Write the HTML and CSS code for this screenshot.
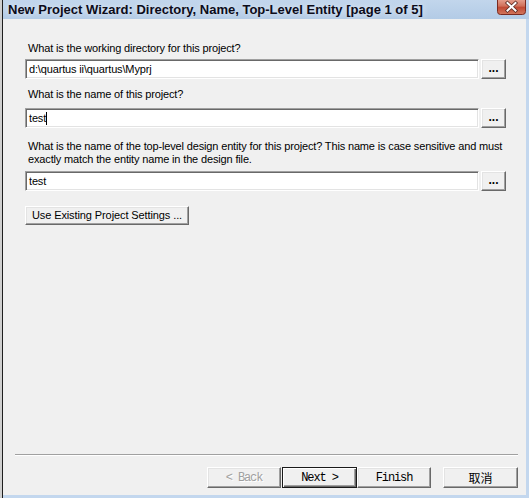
FILE: index.html
```html
<!DOCTYPE html>
<html>
<head>
<meta charset="utf-8">
<link rel="stylesheet" href="styles.css">
</head>
<body>
<div class="screen">
  <div class="backdrop"></div>
  <div class="window">
    <div class="titlebar">
      <span class="title">New Project Wizard: Directory, Name, Top-Level Entity [page 1 of 5]</span>
      <span class="close">
        <svg width="29" height="16" viewBox="0 0 29 16">
          <defs>
            <linearGradient id="cg" x1="0" y1="0" x2="0" y2="1">
              <stop offset="0" stop-color="#e8a493"/>
              <stop offset="0.45" stop-color="#d0705a"/>
              <stop offset="0.55" stop-color="#c14a34"/>
              <stop offset="1" stop-color="#d2785e"/>
            </linearGradient>
          </defs>
          <path d="M0.5 0 V12.5 Q0.5 15.5 3.5 15.5 H25.5 Q28.5 15.5 28.5 12.5 V0" fill="url(#cg)" stroke="#7a2a20"/>
          <path d="M10.5 4 L18.5 11.5 M18.5 4 L10.5 11.5" stroke="#5a2a22" stroke-width="3.6" stroke-linecap="square"/>
          <path d="M10.5 4 L18.5 11.5 M18.5 4 L10.5 11.5" stroke="#ffffff" stroke-width="2" stroke-linecap="square"/>
        </svg>
      </span>
    </div>
    <div class="body">
      <div class="content">
        <div class="label l1">What is the working directory for this project?</div>
        <div class="row">
          <div class="input">d:\quartus ii\quartus\Myprj</div>
          <div class="btn browse">...</div>
        </div>
        <div class="label l2">What is the name of this project?</div>
        <div class="row">
          <div class="input">test<span class="caret"></span></div>
          <div class="btn browse">...</div>
        </div>
        <div class="label l3">What is the name of the top-level design entity for this project? This name is case sensitive and must<br>exactly match the entity name in the design file.</div>
        <div class="row">
          <div class="input">test</div>
          <div class="btn browse">...</div>
        </div>
        <div class="btn existing">Use Existing Project Settings ...</div>
      </div>
      <div class="footer">
        <div class="separator"></div>
        <div class="buttons">
          <div class="btn nav disabled">&lt; Back</div>
          <div class="btn nav default"><span>Next &gt;</span></div>
          <div class="btn nav">Finish</div>
          <div class="btn nav cancel">取消</div>
        </div>
      </div>
    </div>
  </div>
</div>
</body>
</html>
```
FILE: styles.css
```css
* { box-sizing: border-box; }
html, body { margin: 0; padding: 0; }
body {
  width: 529px;
  height: 498px;
  overflow: hidden;
  background: #f0f0f0;
  font-family: "Liberation Sans", Arial, sans-serif;
  font-size: 11px;
  color: #000;
}
.screen {
  display: flex;
  width: 529px;
  height: 498px;
}
.backdrop {
  width: 3px;
  flex: none;
  background: #cfcfcf;
  border-right: 1px solid #1e1e1e;
}
.window {
  flex: 1;
  display: flex;
  flex-direction: column;
  min-width: 0;
}
.titlebar {
  height: 19px;
  flex: none;
  display: flex;
  align-items: flex-start;
  justify-content: space-between;
  background: linear-gradient(#c2d6ec, #b3cbe6);
  padding-left: 5px;
  padding-right: 3px;
}
.title {
  font-family: "Liberation Sans", Arial, sans-serif;
  font-weight: bold;
  font-size: 13px;
  line-height: 19px;
  color: #0c0c1a;
  text-shadow: 0 0 6px rgba(255,255,255,0.8);
  white-space: nowrap;
}
.close {
  display: block;
  height: 16px;
  margin-top: -1px;
}
.close svg { display: block; }
.body {
  flex: 1;
  display: flex;
  flex-direction: column;
  justify-content: space-between;
  border-right: 3px solid #c3d7ee;
  border-bottom: 3px solid #c3d7ee;
  background: #f0f0f0;
}
.content {
  padding-left: 22px;
  padding-right: 20px;
  display: flex;
  flex-direction: column;
  align-items: flex-start;
}
.label {
  line-height: 13px;
  padding-left: 3px;
  width: 100%;
  letter-spacing: -0.15px;
  white-space: nowrap;
}
.l1 { margin-top: 23px; margin-bottom: 4px; }
.l2 { margin-top: 9px; margin-bottom: 7px; }
.l3 { margin-top: 12px; margin-bottom: 5px; }
.row {
  display: flex;
  width: 100%;
  gap: 2px;
}
.input {
  flex: 1;
  height: 20px;
  background: #fff;
  border-top: 1px solid #a0a0a0;
  border-left: 1px solid #a0a0a0;
  border-right: 1px solid #fff;
  border-bottom: 1px solid #fff;
  box-shadow: inset 1px 1px 0 #696969, inset -1px -1px 0 #e3e3e3;
  padding-left: 3px;
  line-height: 18px;
  letter-spacing: -0.15px;
  white-space: nowrap;
  display: flex;
  align-items: center;
}
.caret {
  display: inline-block;
  width: 1px;
  height: 13px;
  background: #000;
}
.btn {
  background: #f0f0f0;
  border-top: 1px solid #fff;
  border-left: 1px solid #fff;
  border-right: 1px solid #696969;
  border-bottom: 1px solid #696969;
  box-shadow: inset -1px -1px 0 #a0a0a0, inset 1px 1px 0 #e3e3e3;
  display: flex;
  align-items: center;
  justify-content: center;
  white-space: nowrap;
}
.browse {
  width: 25px;
  height: 20px;
  font-weight: bold;
  font-size: 12px;
  padding-bottom: 2px;
}
.existing {
  margin-top: 15px;
  height: 19px;
  padding: 0 8px;
  width: 164px;
  line-height: 17px;
  letter-spacing: -0.1px;
}
.footer {
  padding: 0 8px 7px 12px;
  display: flex;
  flex-direction: column;
}
.separator {
  height: 2px;
  border-top: 1px solid #a0a0a0;
  border-bottom: 1px solid #fff;
  margin-bottom: 11px;
}
.buttons {
  display: flex;
  justify-content: flex-end;
  align-items: center;
}
.nav {
  width: 74px;
  height: 21px;
  font-family: "Liberation Mono", "Courier New", monospace;
  font-size: 12px;
  letter-spacing: -1.1px;
}
.disabled {
  color: #a0a0a0;
  text-shadow: 1px 1px 0 #fff;
}
.default {
  border: 1px solid #1a1a1a;
  box-shadow: inset 1px 1px 0 #fff, inset -1px -1px 0 #696969, inset -2px -2px 0 #a0a0a0;
  width: 75px;
  margin-left: 1px;
}
.cancel {
  margin-left: 12px;
  width: 75px;
  font-family: "Noto Sans CJK SC", sans-serif;
  font-size: 12px;
  letter-spacing: 0;
}
```
